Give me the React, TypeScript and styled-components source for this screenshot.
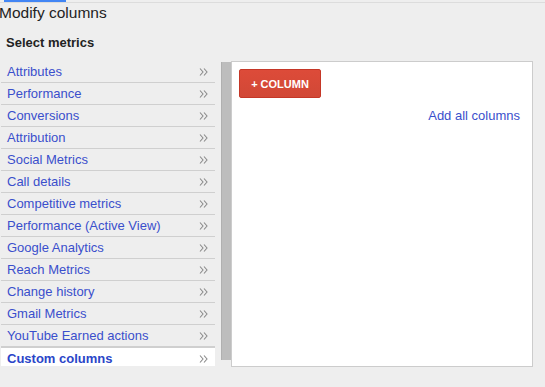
import React from 'react';
import styled, {createGlobalStyle} from 'styled-components';

const GlobalStyle = createGlobalStyle`
  body {
    margin: 0;
    background: #eeeeee;
    font-family: "Liberation Sans", Arial, sans-serif;
  }
`;

const metrics = [
  'Attributes',
  'Performance',
  'Conversions',
  'Attribution',
  'Social Metrics',
  'Call details',
  'Competitive metrics',
  'Performance (Active View)',
  'Google Analytics',
  'Reach Metrics',
  'Change history',
  'Gmail Metrics',
  'YouTube Earned actions',
];

const Page = styled.div`
  width: 545px;
  height: 387px;
  overflow: hidden;
`;

const TopStrip = styled.div`
  height: 2px;
  border-bottom: 1px solid #dcdcdc;
`;

const ActiveTab = styled.div`
  margin-left: 4px;
  width: 62px;
  height: 2px;
  background: #4285f4;
`;

const Title = styled.div`
  margin-left: -1px;
  font-size: 15.5px;
  line-height: 20px;
  color: #222;
`;

const SectionLabel = styled.div`
  margin: 12px 0 0 6px;
  font-size: 13px;
  font-weight: bold;
  line-height: 16px;
  color: #222;
`;

const Body = styled.div`
  display: flex;
  align-items: flex-start;
  margin-top: 10px;
`;

const ListViewport = styled.div`
  display: flex;
  height: 305px;
  overflow: hidden;
`;

const List = styled.div`
  margin-left: 1px;
  width: 214px;
`;

const Row = styled.div<{$active?: boolean}>`
  display: flex;
  align-items: center;
  justify-content: space-between;
  height: 21px;
  padding: 0 7px 0 6px;
  border-bottom: 1px solid #cfcfcf;
  border-top: ${(p) => (p.$active ? '1px solid #cfcfcf' : 'none')};
  background: ${(p) => (p.$active ? '#fff' : 'transparent')};
  font-size: 13px;
  font-weight: ${(p) => (p.$active ? 'bold' : 'normal')};
  color: ${(p) => (p.$active ? '#2a45c8' : '#3a4fcc')};
  cursor: pointer;
`;

const ChevronIcon = styled.svg`
  display: block;
  flex: none;
`;

const Chevron: React.FC = () => (
  <ChevronIcon width="9" height="8" viewBox="0 0 9 8">
    <path d="M1 0.5 L4 4 L1 7.5 M5 0.5 L8 4 L5 7.5" fill="none" stroke="#8a8a8a" strokeWidth="1.1" />
  </ChevronIcon>
);

const Scrollbar = styled.div`
  margin: 1px 0 0 6px;
  width: 9px;
  height: 298px;
  background: #bdbdbd;
  border-left: 1px solid #b0b0b0;
`;

const Panel = styled.div`
  width: 302px;
  height: 306px;
  box-sizing: border-box;
  padding: 7px;
  background: #fff;
  border: 1px solid #cccccc;
`;

const AddButton = styled.button`
  display: block;
  width: 82px;
  height: 29px;
  border: 1px solid #c53727;
  border-radius: 2px;
  background: linear-gradient(#dd4b39, #d14836);
  color: #fff;
  font-family: inherit;
  font-size: 11px;
  font-weight: bold;
  padding: 0;
`;

const AddAll = styled.a`
  display: block;
  margin: 10px 5px 0 0;
  text-align: right;
  font-size: 13px;
  line-height: 15px;
  color: #3a4fcc;
  text-decoration: none;
`;

const App: React.FC = () => (
  <Page>
    <GlobalStyle />
    <TopStrip>
      <ActiveTab />
    </TopStrip>
    <Title>Modify columns</Title>
    <SectionLabel>Select metrics</SectionLabel>
    <Body>
      <ListViewport>
        <List>
          {metrics.map((m) => (
            <Row key={m}>
              {m}
              <Chevron />
            </Row>
          ))}
          <Row $active>
            Custom columns
            <Chevron />
          </Row>
        </List>
        <Scrollbar />
      </ListViewport>
      <Panel>
        <AddButton>+ COLUMN</AddButton>
        <AddAll href="#">Add all columns</AddAll>
      </Panel>
    </Body>
  </Page>
);

export default App;
